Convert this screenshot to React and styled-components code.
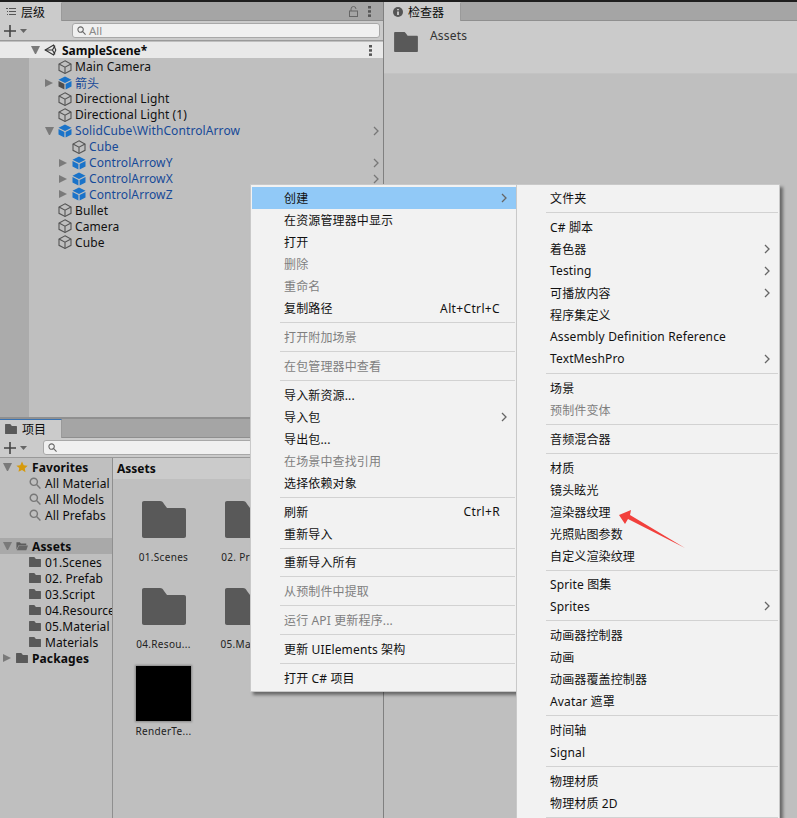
import styled, { createGlobalStyle } from 'styled-components';

const GlobalStyle = createGlobalStyle`
  html, body {
    margin: 0;
    padding: 0;
    background: #bfbfbf;
    overflow: hidden;
  }
  * {
    box-sizing: border-box;
  }
`;

const uiFont = `"Noto Sans", "Noto Sans CJK SC", sans-serif`;

const Page = styled.div`
  position: relative;
  width: 797px;
  height: 818px;
  overflow: hidden;
  display: grid;
  grid-template-columns: 383px 414px;
  background: #bfbfbf;
  border-top: 2px solid #1e1e1e;
  font-family: ${uiFont};
  font-size: 12px;
  color: #0c0c0c;
`;

const LeftColumn = styled.div`
  display: flex;
  flex-direction: column;
  min-width: 0;
`;

const HierarchyPanel = styled.section`
  height: 417px;
  display: flex;
  flex-direction: column;
  border-bottom: 2px solid #8f8f8f;
`;

const ProjectPanel = styled.section`
  flex: 1;
  display: flex;
  flex-direction: column;
  min-height: 0;
`;

const TabBar = styled.div`
  height: 19px;
  flex: none;
  display: flex;
  align-items: stretch;
  justify-content: space-between;
  background: #a5a5a5;
  border-bottom: 1px solid #8f8f8f;
`;

const Tab = styled.div`
  width: ${(p) => p.$width}px;
  display: flex;
  align-items: center;
  gap: 5px;
  padding-left: ${(p) => p.$pad || 5}px;
  margin-bottom: -1px;
  background: #cbcbcb;
  border-top: 1px solid ${(p) => (p.$accent ? '#3a72b0' : '#cbcbcb')};
  border-right: 1px solid #9a9a9a;
  font-size: 12px;
`;

const TabTools = styled.div`
  display: flex;
  align-items: center;
  gap: 10px;
  padding-right: 12px;
`;

const Toolbar = styled.div`
  height: 20px;
  flex: none;
  display: flex;
  align-items: center;
  background: #cbcbcb;
  border-bottom: 1px solid #999;
  padding-left: 4px;
`;

const SearchBox = styled.div`
  height: 15px;
  flex: 1;
  margin-left: ${(p) => p.$left}px;
  margin-right: 3px;
  display: flex;
  align-items: center;
  gap: 3px;
  padding-left: 4px;
  background: #f0f0f0;
  border: 1px solid #a8a8a8;
  border-radius: 3px;
  color: #8a8a8a;
  font-size: 11.5px;
`;

const SceneRow = styled.div`
  height: 16px;
  flex: none;
  margin-top: 1px;
  display: flex;
  align-items: center;
  padding-left: 31px;
  padding-right: 11px;
  background: #e9e9e9;
  font-weight: 700;
  font-size: 12px;
`;

const SceneTitle = styled.span`
  flex: 1;
  margin-left: 4px;
`;

const Tree = styled.div`
  flex: 1;
  padding-top: 1px;
  background: linear-gradient(to right, #ababab 29px, #bfbfbf 29px);
`;

const Row = styled.div`
  height: 15.95px;
  display: flex;
  align-items: center;
  padding-left: ${(p) => 45 + p.$depth * 14}px;
  padding-right: 4px;
  white-space: nowrap;
  letter-spacing: 0.1px;
  color: ${(p) => (p.$blue ? '#174a98' : '#111')};
`;

const Caret = styled.span`
  width: 9px;
  height: 0;
  flex: none;
  margin-right: ${(p) => (p.$flush ? 0 : 4)}px;
  ${(p) =>
    p.$open
      ? 'border-left: 4.5px solid transparent; border-right: 4.5px solid transparent; border-top: 8px solid #7a7a7a;'
      : 'border-top: 4.5px solid transparent; border-bottom: 4.5px solid transparent; border-left: 8px solid #7a7a7a;'}
  ${(p) => p.$hidden && 'visibility: hidden;'}
`;

const RowLabel = styled.span`
  flex: 1;
  margin-left: 3px;
  min-width: 0;
`;

const Body = styled.div`
  flex: 1;
  min-height: 0;
  display: grid;
  grid-template-columns: 113px 1fr;
`;

const Sidebar = styled.div`
  border-right: 1px solid #8f8f8f;
  padding-top: 1px;
  background: #bfbfbf;
  overflow: hidden;
`;

const SideRow = styled.div`
  height: 16px;
  display: flex;
  align-items: center;
  padding-left: ${(p) => p.$indent}px;
  gap: 4px;
  white-space: nowrap;
  letter-spacing: 0.1px;
  font-weight: ${(p) => (p.$bold ? 700 : 400)};
  background: ${(p) => (p.$selected ? '#a9a9a9' : 'transparent')};
`;

const SideGap = styled.div`
  height: 15px;
`;

const Content = styled.div`
  display: flex;
  flex-direction: column;
  min-width: 0;
`;

const ContentHeader = styled.div`
  height: 21px;
  flex: none;
  display: flex;
  align-items: center;
  padding-left: 4px;
  background: #cbcbcb;
  font-weight: 700;
  font-size: 12px;
`;

const AssetGrid = styled.div`
  display: grid;
  grid-template-columns: repeat(2, 83px);
  grid-auto-rows: 87px;
  padding: 13px 0 0 9px;
`;

const Asset = styled.div`
  display: flex;
  flex-direction: column;
  align-items: center;
`;

const AssetThumb = styled.div`
  height: 55px;
  display: flex;
  align-items: center;
  justify-content: center;
`;

const BlackThumb = styled.div`
  width: 55px;
  height: 55px;
  background: #000;
  box-shadow: 0 0 2px 1px rgba(0, 0, 0, 0.3);
`;

const AssetLabel = styled.div`
  margin-top: 3px;
  font-size: 10px;
  letter-spacing: 0.3px;
  white-space: nowrap;
  color: #222;
`;

const Inspector = styled.section`
  display: flex;
  flex-direction: column;
  border-left: 1px solid #808080;
`;

const InspectorHead = styled.div`
  height: 53px;
  display: flex;
  gap: 12px;
  padding: 11px 0 0 10px;
  background: #cbcbcb;
  border-bottom: 1px solid #c3c3c3;
  font-size: 12px;
  letter-spacing: 0.2px;
  color: #333;
`;

const HeadTitle = styled.span`
  margin-top: -5px;
`;

const Menu = styled.div`
  position: absolute;
  left: ${(p) => p.$left}px;
  top: 182px;
  width: ${(p) => p.$width}px;
  padding: 2px 0 2px 1px;
  background: #f2f2f2;
  border: 1px solid #c9c9c9;
  box-shadow: 3px 3px 3px rgba(0, 0, 0, 0.45);
  font-size: 12px;
  color: #111;
  z-index: ${(p) => p.$layer};
`;

const MenuItem = styled.div`
  height: 22px;
  display: flex;
  align-items: center;
  justify-content: space-between;
  padding-left: ${(p) => p.$pad}px;
  padding-right: 9px;
  white-space: nowrap;
  letter-spacing: 0.14px;
  background: ${(p) => (p.$active ? '#91c9f7' : 'transparent')};
  color: ${(p) => (p.$disabled ? '#7f7f7f' : '#111')};
`;

const Separator = styled.div`
  height: 6.9px;
  display: flex;
  align-items: center;
  padding-left: ${(p) => p.$pad - 4}px;
  padding-right: 1px;

  &::after {
    content: '';
    flex: 1;
    height: 1px;
    background: #d2d2d2;
  }
`;

const Shortcut = styled.span`
  margin-right: 7px;
  letter-spacing: 0.35px;
`;

const Annotation = styled.svg`
  position: absolute;
  left: 610px;
  top: 505px;
  z-index: 5;
`;

function CubeIcon({ size = 14 }) {
  return (
    <svg width={size} height={size} viewBox="0 0 14 14" fill="none" stroke="#555" strokeWidth="1.1" style={{ flex: 'none' }}>
      <path d="M7 .8 13 4v6.3L7 13.4 1 10.3V4z" />
      <path d="M1 4l6 3.2L13 4M7 7.2v6.2" />
    </svg>
  );
}

function PrefabIcon({ half }) {
  return (
    <svg width="14" height="14" viewBox="0 0 14 14" style={{ flex: 'none' }}>
      <path d="M7 .5 13.5 3.8 7 6.9.5 3.8z" fill="#1a73c9" />
      <path d="M.5 5v5.5L6.4 13.6V8z" fill={half ? '#4f4f4f' : '#1a73c9'} />
      <path d="M13.5 5v5.5L7.6 13.6V8z" fill="#1a73c9" />
    </svg>
  );
}

function UnityIcon() {
  return (
    <svg width="14" height="14" viewBox="0 0 14 14" fill="none" stroke="#333" strokeWidth="1.1" style={{ flex: 'none' }}>
      <path d="M1.2 7 9.6 2 11.8 7 9.6 12z" />
      <path d="M1.2 7h7.2M8.4 7 11 2.6M8.4 7l2.6 4.4" />
    </svg>
  );
}

function Chevron({ color = '#666', size = 5 }) {
  return (
    <svg width={size + 1} height={size * 2} viewBox="0 0 6 10" fill="none" stroke={color} strokeWidth="1.3" style={{ flex: 'none' }}>
      <path d="M1 1l4 4-4 4" />
    </svg>
  );
}

function PlusButton() {
  return (
    <svg width="24" height="14" viewBox="0 0 24 14" style={{ flex: 'none' }}>
      <path d="M6 1v12M0 7h12" stroke="#444" strokeWidth="1.6" />
      <path d="M16 5h7l-3.5 4z" fill="#666" />
    </svg>
  );
}

function SearchIcon({ size = 9, color = '#666' }) {
  return (
    <svg width={size} height={size} viewBox="0 0 10 10" fill="none" stroke={color} strokeWidth="1.2" style={{ flex: 'none' }}>
      <circle cx="4" cy="4" r="3" />
      <path d="M6.3 6.3 9.5 9.5" />
    </svg>
  );
}

function Folder({ width, height, color = '#595959' }) {
  return (
    <svg width={width} height={height} viewBox="0 0 44 37" style={{ flex: 'none' }}>
      <path d="M2 0h16c2 0 3 1 4 3l3 4h17c1.2 0 2 .8 2 2v26c0 1.2-.8 2-2 2H2c-1.2 0-2-.8-2-2V2C0 .8.8 0 2 0z" fill={color} />
    </svg>
  );
}

function OpenFolder() {
  return (
    <svg width="12" height="10" viewBox="0 0 14 11" style={{ flex: 'none' }}>
      <path d="M.5 1h4l1.2 1.5H12v2H3L.5 10z" fill="#5c5c5c" />
      <path d="M3.5 5H14l-2 5.5H1z" fill="#666" />
    </svg>
  );
}

function StarIcon() {
  return (
    <svg width="12" height="12" viewBox="0 0 24 24" fill="#d69a0c" style={{ flex: 'none' }}>
      <path d="M12 1l3.4 7.3 7.900 1-5.800 5.500 1.500 7.900L12 18l-7 3.700 1.500-7.900L.7 9.300l7.900-1z" />
    </svg>
  );
}

function HierarchyGlyph() {
  return (
    <svg width="10" height="10" viewBox="0 0 10 10" stroke="#555" strokeWidth="1" style={{ flex: 'none' }}>
      <path d="M0 1.5h2M3 1.5h7M1 4.5h1M3 4.5h7M1 7.5h1M3 7.5h7" />
    </svg>
  );
}

function InfoGlyph() {
  return (
    <svg width="10" height="10" viewBox="0 0 10 10" style={{ flex: 'none' }}>
      <circle cx="5" cy="5" r="5" fill="#555" />
      <path d="M5 2v1.2M5 4.4V8" stroke="#ddd" strokeWidth="1.6" />
    </svg>
  );
}

function DotsGlyph() {
  return (
    <svg width="3" height="11" viewBox="0 0 3 11" fill="#555" style={{ flex: 'none' }}>
      <rect width="3" height="2.5" />
      <rect y="4.2" width="3" height="2.5" />
      <rect y="8.4" width="3" height="2.5" />
    </svg>
  );
}

function LockGlyph() {
  return (
    <svg width="9" height="11" viewBox="0 0 9 11" fill="none" stroke="#666" style={{ flex: 'none' }}>
      <rect x=".5" y="5" width="8" height="5.5" />
      <path d="M2 5V3a2.5 2.5 0 0 1 5 0" />
    </svg>
  );
}

const hierarchyRows = [
  { label: 'Main Camera', depth: 0, icon: 'cube' },
  { label: '箭头', depth: 0, icon: 'half', caret: 'closed', blue: true },
  { label: 'Directional Light', depth: 0, icon: 'cube' },
  { label: 'Directional Light (1)', depth: 0, icon: 'cube' },
  { label: 'SolidCube\\WithControlArrow', depth: 0, icon: 'prefab', caret: 'open', blue: true, more: true },
  { label: 'Cube', depth: 1, icon: 'cube', blue: true },
  { label: 'ControlArrowY', depth: 1, icon: 'prefab', caret: 'closed', blue: true, more: true },
  { label: 'ControlArrowX', depth: 1, icon: 'prefab', caret: 'closed', blue: true, more: true },
  { label: 'ControlArrowZ', depth: 1, icon: 'prefab', caret: 'closed', blue: true },
  { label: 'Bullet', depth: 0, icon: 'cube' },
  { label: 'Camera', depth: 0, icon: 'cube' },
  { label: 'Cube', depth: 0, icon: 'cube' },
];

const assets = ['01.Scenes', '02. Prefab', '04.Resou...', '05.Mater...'];

const firstMenu = [
  { t: '创建', arrow: true, active: true },
  { t: '在资源管理器中显示' },
  { t: '打开' },
  { t: '删除', off: true },
  { t: '重命名', off: true },
  { t: '复制路径', key: 'Alt+Ctrl+C' },
  'sep',
  { t: '打开附加场景', off: true },
  'sep',
  { t: '在包管理器中查看', off: true },
  'sep',
  { t: '导入新资源...' },
  { t: '导入包', arrow: true },
  { t: '导出包...' },
  { t: '在场景中查找引用', off: true },
  { t: '选择依赖对象' },
  'sep',
  { t: '刷新', key: 'Ctrl+R' },
  { t: '重新导入' },
  'sep',
  { t: '重新导入所有' },
  'sep',
  { t: '从预制件中提取', off: true },
  'sep',
  { t: '运行 API 更新程序...', off: true },
  'sep',
  { t: '更新 UIElements 架构' },
  'sep',
  { t: '打开 C# 项目' },
];

const secondMenu = [
  { t: '文件夹' },
  'sep',
  { t: 'C# 脚本' },
  { t: '着色器', arrow: true },
  { t: 'Testing', arrow: true },
  { t: '可播放内容', arrow: true },
  { t: '程序集定义' },
  { t: 'Assembly Definition Reference' },
  { t: 'TextMeshPro', arrow: true },
  'sep',
  { t: '场景' },
  { t: '预制件变体', off: true },
  'sep',
  { t: '音频混合器' },
  'sep',
  { t: '材质' },
  { t: '镜头眩光' },
  { t: '渲染器纹理' },
  { t: '光照贴图参数' },
  { t: '自定义渲染纹理' },
  'sep',
  { t: 'Sprite 图集' },
  { t: 'Sprites', arrow: true },
  'sep',
  { t: '动画器控制器' },
  { t: '动画' },
  { t: '动画器覆盖控制器' },
  { t: 'Avatar 遮罩' },
  'sep',
  { t: '时间轴' },
  { t: 'Signal' },
  'sep',
  { t: '物理材质' },
  { t: '物理材质 2D' },
  'sep',
];

function ContextMenu({ items, left, width, pad, layer }) {
  return (
    <Menu $left={left} $width={width} $layer={layer}>
      {items.map((item, i) =>
        item === 'sep' ? (
          <Separator key={i} $pad={pad} />
        ) : (
          <MenuItem key={i} $pad={pad} $active={item.active} $disabled={item.off}>
            <span>{item.t}</span>
            {item.key && <Shortcut>{item.key}</Shortcut>}
            {item.arrow && <Chevron />}
          </MenuItem>
        )
      )}
    </Menu>
  );
}

function App() {
  return (
    <Page>
      <GlobalStyle />
      <LeftColumn>
        <HierarchyPanel>
          <TabBar>
            <Tab $width={62} $pad={6}>
              <HierarchyGlyph />
              层级
            </Tab>
            <TabTools>
              <LockGlyph />
              <DotsGlyph />
            </TabTools>
          </TabBar>
          <Toolbar>
            <PlusButton />
            <SearchBox $left={44}>
              <SearchIcon />
              All
            </SearchBox>
          </Toolbar>
          <SceneRow>
            <Caret $open />
            <UnityIcon />
            <SceneTitle>SampleScene*</SceneTitle>
            <DotsGlyph />
          </SceneRow>
          <Tree>
            {hierarchyRows.map((row, i) => (
              <Row key={i} $depth={row.depth} $blue={row.blue}>
                <Caret $open={row.caret === 'open'} $hidden={!row.caret} />
                {row.icon === 'cube' && <CubeIcon />}
                {row.icon === 'half' && <PrefabIcon half />}
                {row.icon === 'prefab' && <PrefabIcon />}
                <RowLabel>{row.label}</RowLabel>
                {row.more && <Chevron color="#777" />}
              </Row>
            ))}
          </Tree>
        </HierarchyPanel>
        <ProjectPanel>
          <TabBar>
            <Tab $width={62} $pad={5} $accent>
              <Folder width={12} height={10} />
              项目
            </Tab>
          </TabBar>
          <Toolbar>
            <PlusButton />
            <SearchBox $left={15}>
              <SearchIcon />
            </SearchBox>
          </Toolbar>
          <Body>
            <Sidebar>
              <SideRow $indent={3} $bold>
                <Caret $open $flush />
                <StarIcon />
                Favorites
              </SideRow>
              {['All Material', 'All Models', 'All Prefabs'].map((name) => (
                <SideRow key={name} $indent={29}>
                  <SearchIcon size={12} color="#777" />
                  {name}
                </SideRow>
              ))}
              <SideGap />
              <SideRow $indent={3} $bold $selected>
                <Caret $open $flush />
                <OpenFolder />
                Assets
              </SideRow>
              {['01.Scenes', '02. Prefab', '03.Script', '04.Resource', '05.Material', 'Materials'].map((name) => (
                <SideRow key={name} $indent={29}>
                  <Folder width={12} height={10} />
                  {name}
                </SideRow>
              ))}
              <SideRow $indent={3} $bold>
                <Caret $flush />
                <Folder width={12} height={10} />
                Packages
              </SideRow>
            </Sidebar>
            <Content>
              <ContentHeader>Assets</ContentHeader>
              <AssetGrid>
                {assets.map((name) => (
                  <Asset key={name}>
                    <AssetThumb>
                      <Folder width={44} height={37} />
                    </AssetThumb>
                    <AssetLabel>{name}</AssetLabel>
                  </Asset>
                ))}
                <Asset>
                  <BlackThumb />
                  <AssetLabel>RenderTe...</AssetLabel>
                </Asset>
              </AssetGrid>
            </Content>
          </Body>
        </ProjectPanel>
      </LeftColumn>
      <Inspector>
        <TabBar>
          <Tab $width={77} $pad={9}>
            <InfoGlyph />
            检查器
          </Tab>
        </TabBar>
        <InspectorHead>
          <Folder width={24} height={20} />
          <HeadTitle>Assets</HeadTitle>
        </InspectorHead>
      </Inspector>
      <ContextMenu items={firstMenu} left={250} width={267} pad={32} layer={2} />
      <ContextMenu items={secondMenu} left={516} width={264} pad={32} layer={3} />
      <Annotation width="80" height="50" viewBox="0 0 80 50">
        <path d="M9 8 21 3 20 8 75 41 18 12 15 17z" fill="#f2403c" />
      </Annotation>
    </Page>
  );
}

export default App;
